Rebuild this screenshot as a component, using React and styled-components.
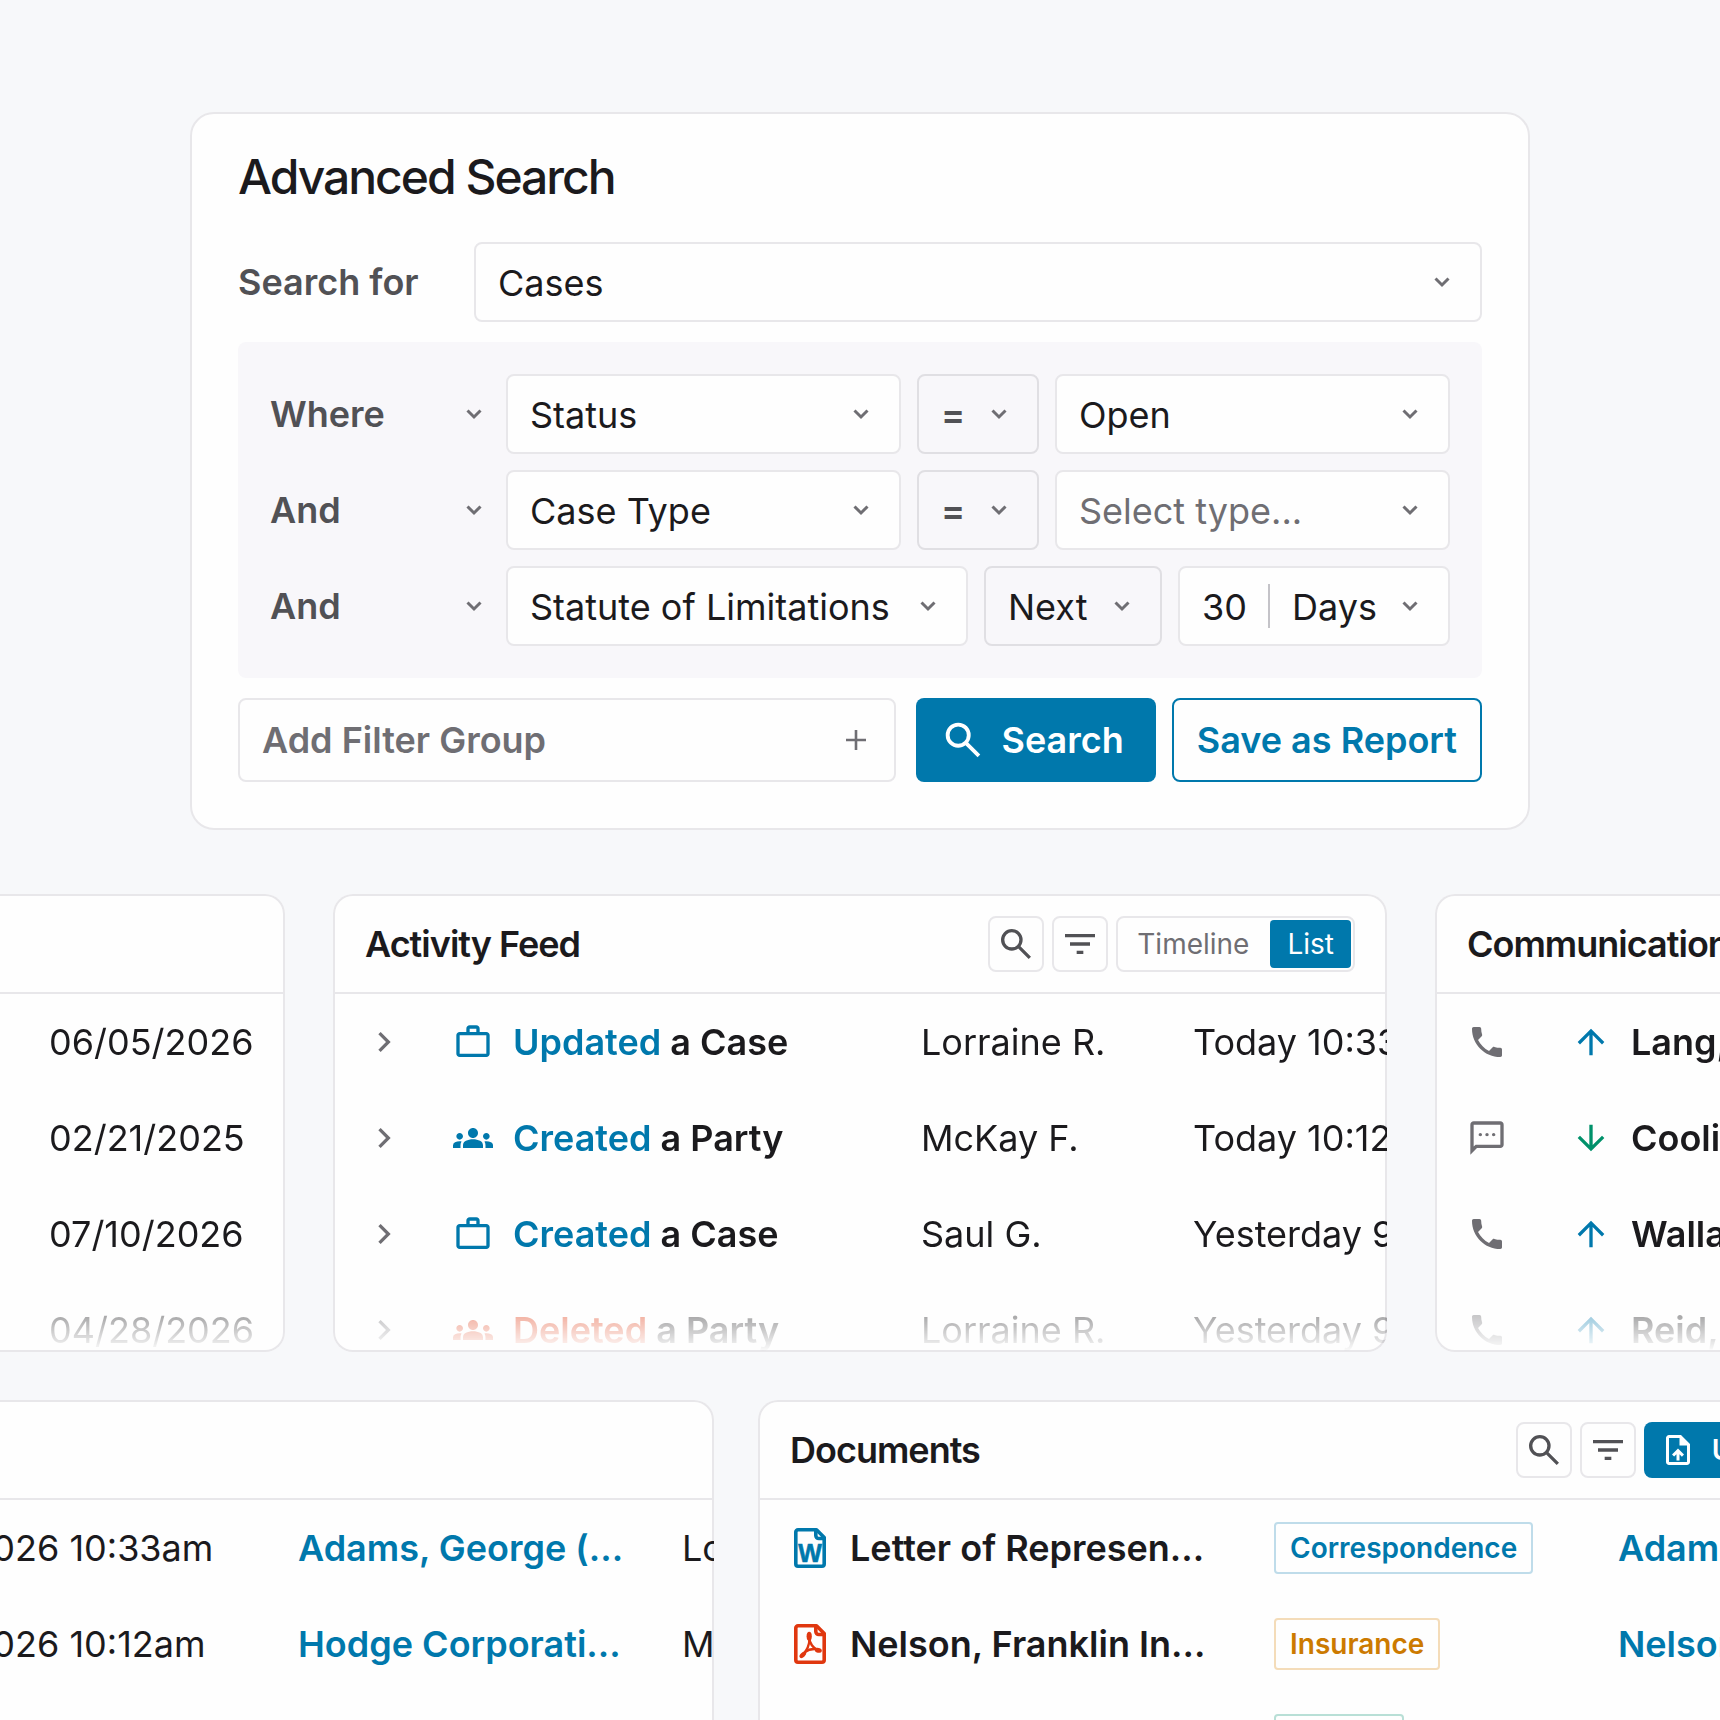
import React, { useState } from 'react';
import styled, { createGlobalStyle, css } from 'styled-components';
import { MdGroups, MdPhone } from 'react-icons/md';

const colors = {
  page: '#f7f8fa',
  surface: '#fefefe',
  group: '#f8f7fa',
  border: '#e8e7ea',
  borderDark: '#e0dfe3',
  divider: '#c4c3c8',
  text: '#1b1a1d',
  label: '#515155',
  muted: '#6f6e73',
  blue: '#0078ac',
  red: '#e0370f',
  green: '#00916a',
};

const GlobalStyle = createGlobalStyle`
  * {
    box-sizing: border-box;
  }

  body {
    margin: 0;
    background: ${colors.page};
    color: ${colors.text};
    font-family: Inter, 'Liberation Sans', sans-serif;
    font-size: 36px;
    line-height: 44px;
  }

  button, input, select {
    font: inherit;
    color: inherit;
  }

  svg {
    display: block;
    flex-shrink: 0;
  }
`;

const Page = styled.main`
  display: flex;
  flex-direction: column;
  height: 100vh;
  padding-top: 112px;
  overflow: hidden;
`;

/* Advanced search */

const SearchCard = styled.form`
  display: flex;
  flex-direction: column;
  gap: 20px;
  flex-shrink: 0;
  margin: 0 190px 64px;
  padding: 34px 46px 46px;
  background: ${colors.surface};
  border: 2px solid ${colors.border};
  border-radius: 24px;
`;

const Title = styled.h1`
  margin: 0 0 16px;
  font-size: 48px;
  line-height: 58px;
  font-weight: 500;
  letter-spacing: -2px;
`;

const SearchForRow = styled.div`
  display: flex;
  align-items: center;
`;

const FieldLabel = styled.label`
  width: 236px;
  color: ${colors.label};
  font-weight: 600;
`;

const FilterGroup = styled.div`
  display: flex;
  flex-direction: column;
  gap: 16px;
  padding: 32px;
  background: ${colors.group};
  border-radius: 8px;
`;

const FilterRow = styled.div`
  display: flex;
  gap: 16px;
`;

const SelectBox = styled.div`
  display: grid;
  flex: ${({ $grow }) => ($grow ? '1 1 0' : '0 0 auto')};
  width: ${({ $width }) => $width || 'auto'};
  height: 80px;
  min-width: 0;
  background: ${({ $tone }) => ($tone ? colors.group : colors.surface)};
  border: 2px solid ${({ $tone }) => ($tone ? colors.borderDark : colors.border)};
  border-radius: 8px;

  > * {
    grid-area: 1 / 1;
  }

  > svg {
    place-self: center end;
    margin-right: 28px;
    color: ${colors.muted};
    pointer-events: none;
  }
`;

const Select = styled.select`
  width: 100%;
  min-width: 0;
  padding: 2px 56px 0 22px;
  appearance: none;
  background: none;
  border: 0;
  color: ${({ $placeholder }) => ($placeholder ? colors.muted : colors.text)};

  ${({ $strong }) => $strong && css`
    padding-top: 0;
    color: ${colors.label};
    font-weight: 600;
  `}
`;

const JoinerBox = styled(SelectBox)`
  width: 220px;
  background: none;
  border: 0;

  > svg {
    margin-right: 6px;
  }

  ${Select} {
    padding-left: 0;
  }
`;

const RangeBox = styled.div`
  display: flex;
  align-items: center;
  width: 272px;
  height: 80px;
  background: ${colors.surface};
  border: 2px solid ${colors.border};
  border-radius: 8px;
`;

const AmountInput = styled.input`
  width: 88px;
  padding: 2px 0 0 22px;
  background: none;
  border: 0;
`;

const Divider = styled.span`
  width: 2px;
  height: 44px;
  background: ${colors.divider};
`;

const UnitBox = styled(SelectBox)`
  height: 76px;
  background: none;
  border: 0;
`;

const Actions = styled.div`
  display: flex;
  gap: 16px;
`;

const AddFilterButton = styled.button`
  display: flex;
  flex: 1;
  align-items: center;
  justify-content: space-between;
  height: 84px;
  margin-right: 4px;
  padding: 0 28px 0 22px;
  background: ${colors.surface};
  border: 2px solid ${colors.border};
  border-radius: 8px;
  color: ${colors.muted};
  font-weight: 600;
`;

const PrimaryButton = styled.button`
  display: flex;
  align-items: center;
  gap: 16px;
  height: 84px;
  padding: 0 32px 0 24px;
  background: ${colors.blue};
  border: 0;
  border-radius: 8px;
  color: #fff;
  font-weight: 600;
`;

const OutlineButton = styled.button`
  height: 84px;
  padding: 0 23px;
  background: ${colors.surface};
  border: 2px solid ${colors.blue};
  border-radius: 8px;
  color: ${colors.blue};
  font-weight: 600;
`;

/* Panels */

// Both strips bleed past the edges of the window
const PanelStrip = styled.div`
  display: grid;
  grid-template-columns: minmax(0, 1fr) minmax(0, 2fr) minmax(0, 1fr);
  gap: 48px;
  flex-shrink: 0;
  margin: 0 -242px 48px;
`;

const WideStrip = styled.div`
  display: grid;
  grid-template-columns: minmax(0, 4fr) minmax(0, 5fr);
  gap: 44px;
  flex-shrink: 0;
  margin: 0 -143px 0 -170px;
`;

const Panel = styled.section`
  height: ${({ $short }) => ($short ? '458px' : 'auto')};
  overflow: hidden;
  background: ${colors.surface};
  border-radius: 20px;
  box-shadow: inset 0 0 0 2px ${colors.border};
`;

const PanelHeader = styled.header`
  display: flex;
  align-items: center;
  justify-content: space-between;
  height: 100px;
  padding: 2px 32px 0;
  border-bottom: 2px solid ${colors.border};
`;

const PanelTitle = styled.h2`
  margin: 0;
  font-size: 36px;
  line-height: 44px;
  font-weight: 600;
  letter-spacing: -1px;
`;

const PanelBody = styled.div`
  padding-left: 32px;

  ${({ $fade }) => $fade && css`
    height: 358px;
    mask-image: linear-gradient(to top, transparent, #000 96px);
  `}
`;

const Tools = styled.div`
  display: flex;
  gap: 8px;
`;

const IconButton = styled.button`
  display: flex;
  align-items: center;
  justify-content: center;
  width: 56px;
  height: 56px;
  padding: 0;
  background: ${colors.surface};
  border: 2px solid ${colors.border};
  border-radius: 8px;
  color: ${colors.label};
`;

const Segmented = styled.div`
  display: flex;
  gap: 4px;
  height: 56px;
  padding: 2px;
  border: 2px solid ${colors.border};
  border-radius: 8px;
`;

const Segment = styled.button`
  padding: 0 17px;
  background: ${({ $active }) => ($active ? colors.blue : 'transparent')};
  border: 0;
  border-radius: 4px;
  color: ${({ $active }) => ($active ? '#fff' : colors.muted)};
  font-size: 28px;
  line-height: 34px;
`;

const UploadButton = styled.button`
  display: flex;
  align-items: center;
  gap: 16px;
  height: 56px;
  padding: 0 23px 0 16px;
  background: ${colors.blue};
  border: 0;
  border-radius: 8px;
  color: #fff;
  font-size: 28px;
  font-weight: 600;
`;

const Table = styled.table`
  width: ${({ $width }) => $width || '100%'};
  margin-left: auto;
  table-layout: fixed;
  border-collapse: collapse;

  tr {
    height: 96px;
  }

  td {
    padding: 0;
    white-space: nowrap;
  }
`;

const Expand = styled.button`
  display: block;
  padding: 0;
  background: none;
  border: 0;
  color: ${colors.muted};
`;

const IconText = styled.div`
  display: flex;
  align-items: center;
  gap: 20px;
  font-weight: 600;

  > svg {
    color: ${({ $color }) => $color};
  }
`;

const Verb = styled.span`
  color: ${({ $color }) => $color};
`;

const Muted = styled.div`
  color: ${colors.muted};
`;

const RecordLink = styled.a`
  color: ${colors.blue};
  font-weight: 600;
  text-decoration: none;
`;

const Tag = styled.span`
  display: inline-block;
  padding: 7px 14px;
  border: 2px solid ${({ $border }) => $border};
  border-radius: 4px;
  color: ${({ $color }) => $color};
  font-size: 28px;
  line-height: 34px;
  font-weight: 600;
  vertical-align: middle;
`;

/* Icons */

const Symbol = ({ d, size = 40 }) => (
  <svg width={size} height={size} viewBox="0 -960 960 960" fill="currentColor" aria-hidden="true">
    <path d={d} />
  </svg>
);

const paths = {
  search: 'M784-120 532-372q-30 24-69 38t-83 14q-109 0-184.5-75.5T120-580q0-109 75.5-184.5T380-840q109 0 184.5 75.5T640-580q0 44-14 83t-38 69l252 252-56 56ZM380-400q75 0 127.5-52.5T560-580q0-75-52.5-127.5T380-760q-75 0-127.5 52.5T200-580q0 75 52.5 127.5T380-400Z',
  filter: 'M400-240v-80h160v80H400ZM240-440v-80h480v80H240ZM120-640v-80h720v80H120Z',
  right: 'M504-480 320-664l56-56 240 240-240 240-56-56 184-184Z',
  work: 'M160-120q-33 0-56.5-23.5T80-200v-440q0-33 23.5-56.5T160-720h160v-80q0-33 23.5-56.5T400-880h160q33 0 56.5 23.5T640-800v80h160q33 0 56.5 23.5T880-640v440q0 33-23.5 56.5T800-120H160Zm0-80h640v-440H160v440Zm240-520h160v-80H400v80Z',
  sms: 'M320-520q17 0 28.5-11.5T360-560q0-17-11.5-28.5T320-600q-17 0-28.5 11.5T280-560q0 17 11.5 28.5T320-520Zm160 0q17 0 28.5-11.5T520-560q0-17-11.5-28.5T480-600q-17 0-28.5 11.5T440-560q0 17 11.5 28.5T480-520Zm160 0q17 0 28.5-11.5T680-560q0-17-11.5-28.5T640-600q-17 0-28.5 11.5T600-560q0 17 11.5 28.5T640-520ZM80-80v-720q0-33 23.5-56.5T160-880h640q33 0 56.5 23.5T880-800v480q0 33-23.5 56.5T800-240H240L80-80Zm126-240h594v-480H160v525l46-45Z',
  up: 'M440-160v-487L216-423l-56-57 320-320 320 320-56 57-224-224v487h-80Z',
  down: 'M440-800v487L216-537l-56 57 320 320 320-320-56-57-224 224v-487h-80Z',
  upload: 'M440-200h80v-167l64 64 56-57-160-160-160 160 57 56 63-63v167ZM240-80q-33 0-56.5-23.5T160-160v-640q0-33 23.5-56.5T240-880h320l240 240v480q0 33-23.5 56.5T720-80H240Zm280-520v-200H240v640h480v-440H520Z',
};

const Caret = () => (
  <svg width="20" height="20" viewBox="0 0 20 20" fill="none" aria-hidden="true">
    <path d="M3.5 6.5 10 13l6.5-6.5" stroke="currentColor" strokeWidth="3" />
  </svg>
);

const Plus = () => (
  <svg width="20" height="20" viewBox="0 0 20 20" fill="none" aria-hidden="true">
    <path d="M10 0v20M0 10h20" stroke="currentColor" strokeWidth="2.6" />
  </svg>
);

// Page outline with a folded corner; the file type mark goes inside
const FileIcon = ({ children }) => (
  <svg width="40" height="40" viewBox="-4 0 40 40" fill="none" aria-hidden="true">
    <g stroke="currentColor" strokeWidth="3.6" strokeLinejoin="round">
      <path d="M4 1.8h18.500l7.700 7.700V36a2.200 2.200 0 0 1-2.200 2.200H4A2.200 2.200 0 0 1 1.800 36V4A2.200 2.200 0 0 1 4 1.800Z" />
      <path d="M21.800 2v5.500a3 3 0 0 0 3 3H30" />
    </g>
    {children}
  </svg>
);

const WordIcon = () => (
  <FileIcon>
    <text
      x="16"
      y="34"
      textAnchor="middle"
      fill="currentColor"
      stroke="currentColor"
      strokeWidth="0.6"
      fontFamily="Liberation Sans, sans-serif"
      fontSize="25"
      fontWeight="700"
    >
      W
    </text>
  </FileIcon>
);

const PdfIcon = () => (
  <FileIcon>
    <g stroke="currentColor" strokeWidth="2.4">
      <path d="M15.2 13c.2 6 3.8 11.5 9.3 13.5" />
      <path d="M15.6 14c-.1 7-3.100 13.500-7.600 17.500" />
      <path d="M10.500 28.200c4-2.900 9-3.900 14.500-2.700" />
    </g>
    <g fill="currentColor">
      <ellipse cx="15.2" cy="12.3" rx="2.600" ry="4.500" />
      <ellipse cx="24.3" cy="26.3" rx="3.600" ry="2.400" transform="rotate(14 24.3 26.3)" />
      <ellipse cx="8.8" cy="30.8" rx="4" ry="2.300" transform="rotate(-44 8.8 30.8)" />
    </g>
  </FileIcon>
);

/* Data */

const deadlines = ['06/05/2026', '02/21/2025', '07/10/2026', '04/28/2026'];

const activity = [
  { verb: 'Updated', type: 'Case', user: 'Lorraine R.', time: 'Today 10:33am' },
  { verb: 'Created', type: 'Party', user: 'McKay F.', time: 'Today 10:12am' },
  { verb: 'Created', type: 'Case', user: 'Saul G.', time: 'Yesterday 9:48am' },
  { verb: 'Deleted', type: 'Party', user: 'Lorraine R.', time: 'Yesterday 9:20am' },
];

const communications = [
  { kind: 'phone', direction: 'up', name: 'Lang, Peter' },
  { kind: 'sms', direction: 'down', name: 'Cooling Co.' },
  { kind: 'phone', direction: 'up', name: 'Wallace, Ann' },
  { kind: 'phone', direction: 'up', name: 'Reid, Thomas' },
];

const notes = [
  { date: '06/01/2026 10:33am', party: 'Adams, George (...', user: 'Lorraine R.' },
  { date: '06/01/2026 10:12am', party: 'Hodge Corporati...', user: 'McKay F.' },
];

const documents = [
  { file: 'word', name: 'Letter of Represen...', tag: 'Correspondence', party: 'Adams, George' },
  { file: 'pdf', name: 'Nelson, Franklin In...', tag: 'Insurance', party: 'Nelson, Franklin' },
  { file: 'pdf', name: 'Medical Records', tag: 'Invoice', party: 'Hodge' },
];

const tagColors = {
  Correspondence: { color: colors.blue, border: '#bfdcea' },
  Insurance: { color: '#cc7a00', border: '#f4dcb9' },
  Invoice: { color: colors.green, border: '#b8dfd6' },
};

const Dropdown = ({ label, value, id, as: Box = SelectBox, placeholder, strong, ...box }) => (
  <Box {...box}>
    <Select id={id} aria-label={id ? undefined : label} $placeholder={placeholder} $strong={strong}>
      <option>{value}</option>
    </Select>
    <Caret />
  </Box>
);

const AdvancedSearch = () => (
  <SearchCard onSubmit={(e) => e.preventDefault()}>
    <Title>Advanced Search</Title>
    <SearchForRow>
      <FieldLabel htmlFor="search-for">Search for</FieldLabel>
      <Dropdown id="search-for" value="Cases" $grow />
    </SearchForRow>
    <FilterGroup>
      <FilterRow>
        <Dropdown as={JoinerBox} label="Joiner" value="Where" strong />
        <Dropdown label="Field" value="Status" $grow />
        <Dropdown label="Operator" value="=" strong $tone $width="122px" />
        <Dropdown label="Value" value="Open" $grow />
      </FilterRow>
      <FilterRow>
        <Dropdown as={JoinerBox} label="Joiner" value="And" strong />
        <Dropdown label="Field" value="Case Type" $grow />
        <Dropdown label="Operator" value="=" strong $tone $width="122px" />
        <Dropdown label="Value" value="Select type..." placeholder $grow />
      </FilterRow>
      <FilterRow>
        <Dropdown as={JoinerBox} label="Joiner" value="And" strong />
        <Dropdown label="Field" value="Statute of Limitations" $grow />
        <Dropdown label="Operator" value="Next" $tone $width="178px" />
        <RangeBox>
          <AmountInput aria-label="Amount" defaultValue="30" />
          <Divider />
          <Dropdown as={UnitBox} label="Unit" value="Days" $grow />
        </RangeBox>
      </FilterRow>
    </FilterGroup>
    <Actions>
      <AddFilterButton type="button">
        Add Filter Group
        <Plus />
      </AddFilterButton>
      <PrimaryButton type="submit">
        <Symbol d={paths.search} size={46} />
        Search
      </PrimaryButton>
      <OutlineButton type="button">Save as Report</OutlineButton>
    </Actions>
  </SearchCard>
);

const PanelTools = ({ children }) => (
  <Tools>
    <IconButton aria-label="Search"><Symbol d={paths.search} /></IconButton>
    <IconButton aria-label="Filter"><Symbol d={paths.filter} /></IconButton>
    {children}
  </Tools>
);

const ActivityFeed = () => {
  const [view, setView] = useState('List');

  return (
    <Panel $short>
      <PanelHeader>
        <PanelTitle>Activity Feed</PanelTitle>
        <PanelTools>
          <Segmented>
            {['Timeline', 'List'].map((name) => (
              <Segment key={name} $active={view === name} onClick={() => setView(name)}>
                {name}
              </Segment>
            ))}
          </Segmented>
        </PanelTools>
      </PanelHeader>
      <PanelBody $fade>
        <Table>
          <colgroup>
            <col width="88" />
            <col width="468" />
            <col width="272" />
            <col />
          </colgroup>
          <tbody>
            {activity.map((item, index) => {
              const color = item.verb === 'Deleted' ? colors.red : colors.blue;
              return (
                <tr key={index}>
                  <td><Expand aria-label="Expand"><Symbol d={paths.right} /></Expand></td>
                  <td>
                    <IconText $color={color}>
                      {item.type === 'Case' ? <Symbol d={paths.work} /> : <MdGroups size={40} />}
                      <span><Verb $color={color}>{item.verb}</Verb> a {item.type}</span>
                    </IconText>
                  </td>
                  <td>{item.user}</td>
                  <td>{item.time}</td>
                </tr>
              );
            })}
          </tbody>
        </Table>
      </PanelBody>
    </Panel>
  );
};

const Communications = () => (
  <Panel $short>
    <PanelHeader>
      <PanelTitle>Communications</PanelTitle>
    </PanelHeader>
    <PanelBody $fade>
      <Table>
        <colgroup>
          <col width="104" />
          <col />
        </colgroup>
        <tbody>
          {communications.map((item) => (
            <tr key={item.name}>
              <td>
                <Muted>{item.kind === 'phone' ? <MdPhone size={40} /> : <Symbol d={paths.sms} />}</Muted>
              </td>
              <td>
                <IconText $color={item.direction === 'up' ? colors.blue : colors.green}>
                  <Symbol d={paths[item.direction]} />
                  {item.name}
                </IconText>
              </td>
            </tr>
          ))}
        </tbody>
      </Table>
    </PanelBody>
  </Panel>
);

const Documents = () => (
  <Panel>
    <PanelHeader>
      <PanelTitle>Documents</PanelTitle>
      <PanelTools>
        <UploadButton><Symbol d={paths.upload} size={36} />Upload</UploadButton>
      </PanelTools>
    </PanelHeader>
    <PanelBody>
      <Table>
        <colgroup>
          <col width="484" />
          <col width="344" />
          <col />
        </colgroup>
        <tbody>
          {documents.map((doc) => (
            <tr key={doc.name}>
              <td>
                <IconText $color={doc.file === 'word' ? colors.blue : colors.red}>
                  {doc.file === 'word' ? <WordIcon /> : <PdfIcon />}
                  {doc.name}
                </IconText>
              </td>
              <td>
                <Tag $color={tagColors[doc.tag].color} $border={tagColors[doc.tag].border}>{doc.tag}</Tag>
              </td>
              <td><RecordLink href="#party">{doc.party}</RecordLink></td>
            </tr>
          ))}
        </tbody>
      </Table>
    </PanelBody>
  </Panel>
);

const App = () => (
  <>
    <GlobalStyle />
    <Page>
      <AdvancedSearch />
      <PanelStrip>
        <Panel $short>
          <PanelHeader />
          <PanelBody $fade>
            <Table $width="236px">
              <tbody>
                {deadlines.map((date) => (
                  <tr key={date}><td>{date}</td></tr>
                ))}
              </tbody>
            </Table>
          </PanelBody>
        </Panel>
        <ActivityFeed />
        <Communications />
      </PanelStrip>
      <WideStrip>
        <Panel>
          <PanelHeader />
          <PanelBody>
            <Table>
              <colgroup>
                <col width="436" />
                <col width="384" />
                <col />
              </colgroup>
              <tbody>
                {notes.map((note) => (
                  <tr key={note.date}>
                    <td>{note.date}</td>
                    <td><RecordLink href="#party">{note.party}</RecordLink></td>
                    <td>{note.user}</td>
                  </tr>
                ))}
              </tbody>
            </Table>
          </PanelBody>
        </Panel>
        <Documents />
      </WideStrip>
    </Page>
  </>
);

export default App;
